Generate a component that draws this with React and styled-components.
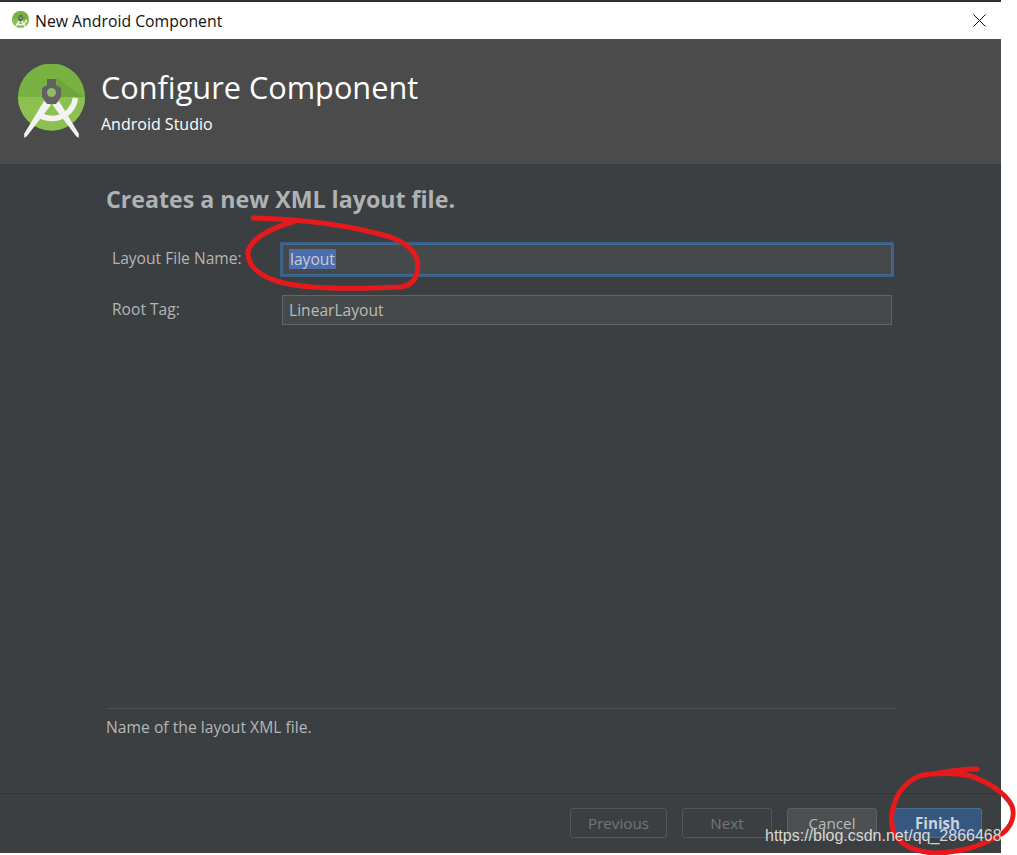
import styled, { createGlobalStyle } from "styled-components";

const GlobalStyle = createGlobalStyle`
  html, body {
    margin: 0;
    background: #fff;
  }
  body {
    font-family: "Open Sans", "Noto Sans", sans-serif;
  }
`;

const Stage = styled.div`
  position: relative;
  width: 1017px;
  height: 855px;
  overflow: hidden;
  background: #fff;
`;

const Dialog = styled.div`
  display: flex;
  flex-direction: column;
  width: 1001px;
  height: 853px;
  background: #3c3f41;
`;

const TopStrip = styled.div`
  height: 2px;
  background: #2d2f31;
`;

const TitleBar = styled.div`
  display: flex;
  align-items: center;
  gap: 6px;
  height: 37px;
  padding: 0 15px 0 12px;
  background: #fff;
  color: #111;
  font-size: 15.8px;
`;

const TitleText = styled.span`
  flex: 1;
`;

const Banner = styled.header`
  display: flex;
  align-items: flex-start;
  gap: 16px;
  height: 125px;
  box-sizing: border-box;
  padding: 25px 0 0 18px;
  background: #4b4b4b;
  color: #fff;
`;

const BannerText = styled.div`
  display: flex;
  flex-direction: column;
  gap: 4px;
`;

const BannerTitle = styled.h1`
  margin: 0;
  font-size: 30.7px;
  font-weight: 400;
  line-height: 46px;
`;

const BannerSub = styled.div`
  font-size: 16px;
  line-height: 20px;
`;

const Content = styled.main`
  flex: 1;
  display: flex;
  flex-direction: column;
  padding: 21px 105px 0 106px;
`;

const Heading = styled.h2`
  margin: 0 0 31px;
  color: #aeb2b4;
  font-size: 23.2px;
  font-weight: 700;
  line-height: 28px;
`;

const Form = styled.div`
  flex: 1;
  display: grid;
  grid-template-columns: 170px 610px;
  grid-template-rows: 31px 30px;
  row-gap: 20px;
  align-content: start;
  padding-left: 6px;
`;

const Label = styled.label`
  align-self: center;
  padding-bottom: 3px;
  color: #b4b6b7;
  font-size: 15.6px;
  line-height: 20px;
`;

const Field = styled.div`
  display: flex;
  align-items: center;
  box-sizing: border-box;
  padding: 0 0 1px ${(p) => (p.$focused ? "6px" : "6px")};
  background: #45494a;
  border: 1px solid ${(p) => (p.$focused ? "#3f6a94" : "#646464")};
  box-shadow: ${(p) => (p.$focused ? "0 0 0 2px #3d6185" : "none")};
  color: #bbb;
  font-size: 15.6px;
`;

const Selected = styled.span`
  padding: 0 1px;
  background: #4b6eaf;
  color: #c8ccd0;
  line-height: 20px;
`;

const HelpLine = styled.div`
  height: 85px;
  box-sizing: border-box;
  padding-top: 8px;
  border-top: 1px solid #4f5254;
  color: #b4b6b7;
  font-size: 15.7px;
  line-height: 20px;
`;

const Footer = styled.footer`
  display: flex;
  justify-content: flex-end;
  gap: 15px;
  height: 60px;
  box-sizing: border-box;
  padding: 14px 19px 0 0;
  border-top: 1px solid #333537;
`;

const Button = styled.button`
  width: ${(p) => p.$width}px;
  height: 30px;
  margin-left: ${(p) => (p.$primary ? "1px" : "0")};
  padding: 0;
  border-radius: 3px;
  border: 1px solid ${(p) => (p.$primary ? "#4c708c" : p.$active ? "#5e6060" : "#54575a")};
  background: ${(p) => (p.$primary ? "#365880" : p.$active ? "#4c5052" : "transparent")};
  color: ${(p) => (p.$primary ? "#c9d3dd" : p.$active ? "#bbb" : "#737678")};
  font-family: inherit;
  font-size: 15.2px;
  font-weight: ${(p) => (p.$primary ? 700 : 400)};
`;

const Ink = styled.svg`
  position: absolute;
  inset: 0;
  pointer-events: none;
`;

const Watermark = styled.div`
  position: absolute;
  top: 826px;
  left: 765px;
  color: #d8d8d8;
  font-family: "Liberation Sans", Arial, sans-serif;
  font-size: 16px;
  line-height: 20px;
  white-space: nowrap;
`;

const StudioLogo = ({ size }) => (
  <svg width={size} height={(size * 74) / 67} viewBox="0 0 67 74">
    <circle cx="33.5" cy="33" r="33.5" fill="#78b242" />
    <path d="M0 33h67a33.5 33.5 0 0 1-67 0z" fill="#8cc152" />
    <path d="M38 13L65 33H40z" fill="#6fa53d" />
    <path d="M19 50Q35 59 48 50Q56 44 57.5 34" fill="none" stroke="#f2f2f2" strokeWidth="5.5" />
    <path d="M26 37L33 41L9 72L6.5 74L6 70z" fill="#f2f2f2" />
    <path d="M41 37L34.5 41L58 72L60.5 74L61 70z" fill="#f2f2f2" />
    <path d="M29 15h9v6l5 3v9l-5 7h-9l-5-7v-9l5-3z" fill="#616161" />
    <circle cx="33.5" cy="28.5" r="4.5" fill="#8fbb63" />
  </svg>
);

const CloseIcon = () => (
  <svg width="13" height="13" viewBox="0 0 13 13">
    <path d="M.5.5l12 12M12.5.5l-12 12" stroke="#111" strokeWidth="1" fill="none" />
  </svg>
);

const App = () => {
  return (
    <Stage>
      <GlobalStyle />
      <Dialog>
        <TopStrip />
        <TitleBar>
          <StudioLogo size={17} />
          <TitleText>New Android Component</TitleText>
          <CloseIcon />
        </TitleBar>
        <Banner>
          <StudioLogo size={67} />
          <BannerText>
            <BannerTitle>Configure Component</BannerTitle>
            <BannerSub>Android Studio</BannerSub>
          </BannerText>
        </Banner>
        <Content>
          <Heading>Creates a new XML layout file.</Heading>
          <Form>
            <Label>Layout File Name:</Label>
            <Field $focused>
              <Selected>layout</Selected>
            </Field>
            <Label>Root Tag:</Label>
            <Field>LinearLayout</Field>
          </Form>
          <HelpLine>Name of the layout XML file.</HelpLine>
        </Content>
        <Footer>
          <Button $width={97}>Previous</Button>
          <Button $width={90}>Next</Button>
          <Button $width={90} $active>Cancel</Button>
          <Button $width={89} $primary>Finish</Button>
        </Footer>
      </Dialog>
      <Ink width="1017" height="855" viewBox="0 0 1017 855" fill="none" stroke="#e61a1c" strokeLinecap="round">
        <path
          strokeWidth="5"
          d="M253 218C290 219 340 222 390 237C410 244 418 255 418 267C417 280 410 286 400 287C360 289 310 290 280 282C258 276 248 265 248 253C249 240 270 228 293 222"
        />
        <path
          strokeWidth="5"
          d="M977 769C960 769 945 772 932 774C915 774 903 785 897 797C892 808 890 820 893 830C898 845 915 852 935 853C960 853 985 845 1003 833C1012 825 1015 815 1012 806C1005 792 985 780 967 775C955 773 945 773 932 774"
        />
      </Ink>
      <Watermark>https://blog.csdn.net/qq_2866468</Watermark>
    </Stage>
  );
};

export default App;
